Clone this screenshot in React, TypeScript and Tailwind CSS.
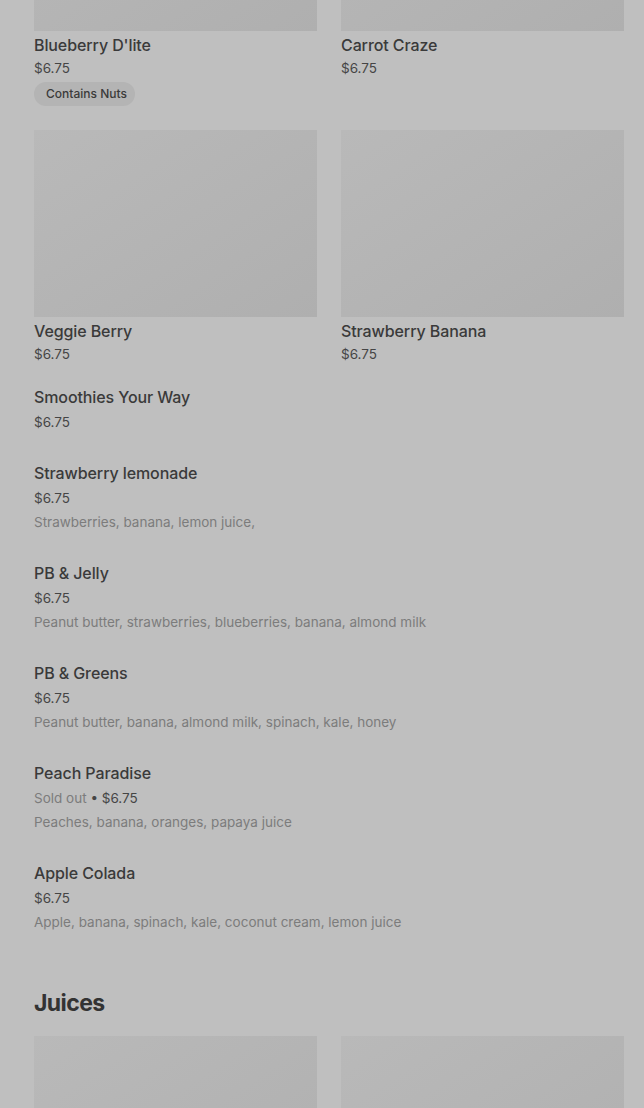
import React from 'react';

type GridItem = { name: string; price: string; badge?: string };
type ListItem = { name: string; price: string; soldOut?: boolean; desc?: string };

const GRID_ITEMS: GridItem[] = [
  { name: "Blueberry D'lite", price: '$6.75', badge: 'Contains Nuts' },
  { name: 'Carrot Craze', price: '$6.75' },
  { name: 'Veggie Berry', price: '$6.75' },
  { name: 'Strawberry Banana', price: '$6.75' },
];

const LIST_ITEMS: ListItem[] = [
  { name: 'Smoothies Your Way', price: '$6.75' },
  { name: 'Strawberry lemonade', price: '$6.75', desc: 'Strawberries, banana, lemon juice,' },
  { name: 'PB & Jelly', price: '$6.75', desc: 'Peanut butter, strawberries, blueberries, banana, almond milk' },
  { name: 'PB & Greens', price: '$6.75', desc: 'Peanut butter, banana, almond milk, spinach, kale, honey' },
  { name: 'Peach Paradise', price: '$6.75', soldOut: true, desc: 'Peaches, banana, oranges, papaya juice' },
  { name: 'Apple Colada', price: '$6.75', desc: 'Apple, banana, spinach, kale, coconut cream, lemon juice' },
];

// image placeholder, photos aren't loaded in this state
const Placeholder: React.FC = () => (
  <div className="h-[187px] w-full bg-linear-to-br from-[#b9b9b9] to-[#afafaf]" />
);

const GridCard: React.FC<{ item: GridItem }> = ({ item }) => (
  <div className="flex flex-col">
    <Placeholder />
    <div className="mt-[2px] text-[16px] leading-[24px] font-medium tracking-[-0.1px] text-[#3a3a3a]">{item.name}</div>
    <div className="text-[13.5px] leading-[23px] text-[#454545]">{item.price}</div>
    {item.badge && (
      <div>
        <span className="inline-flex h-6 items-center rounded-full bg-[#b4b4b4] pl-3 pr-2 text-[12px] font-medium text-[#3a3a3a]">
          {item.badge}
        </span>
      </div>
    )}
  </div>
);

const ListRow: React.FC<{ item: ListItem }> = ({ item }) => (
  <div className="pt-[14px] pb-[13px]">
    <div className="text-[16px] leading-[24px] font-medium tracking-[-0.1px] text-[#3a3a3a]">{item.name}</div>
    <div className="mt-[1px] text-[13.5px] leading-[24px] text-[#454545]">
      {item.soldOut && <span className="text-[#7c7c7c]">Sold out </span>}
      {item.soldOut && <span>• </span>}
      {item.price}
    </div>
    {item.desc && <div className="text-[13.5px] leading-[24px] text-[#7c7c7c]">{item.desc}</div>}
  </div>
);

const App: React.FC = () => {
  return (
    <div
      className="h-[1108px] w-full overflow-hidden bg-[#bfbfbf] pl-[34px] pr-[20px]"
      style={{ fontFamily: 'Inter, "Noto Sans", sans-serif' }}
    >
      <div className="-mt-[156px] grid grid-cols-2 gap-x-6 gap-y-6">
        {GRID_ITEMS.map((item) => (
          <GridCard key={item.name} item={item} />
        ))}
      </div>

      <div className="mt-[5px]">
        {LIST_ITEMS.map((item) => (
          <ListRow key={item.name} item={item} />
        ))}
      </div>

      <h2 className="mt-[40px] text-[23px] leading-[32px] font-bold tracking-[-0.6px] text-[#333333]">Juices</h2>

      <div className="mt-[17px] grid grid-cols-2 gap-x-6">
        <Placeholder />
        <Placeholder />
      </div>
    </div>
  );
};

export default App;
